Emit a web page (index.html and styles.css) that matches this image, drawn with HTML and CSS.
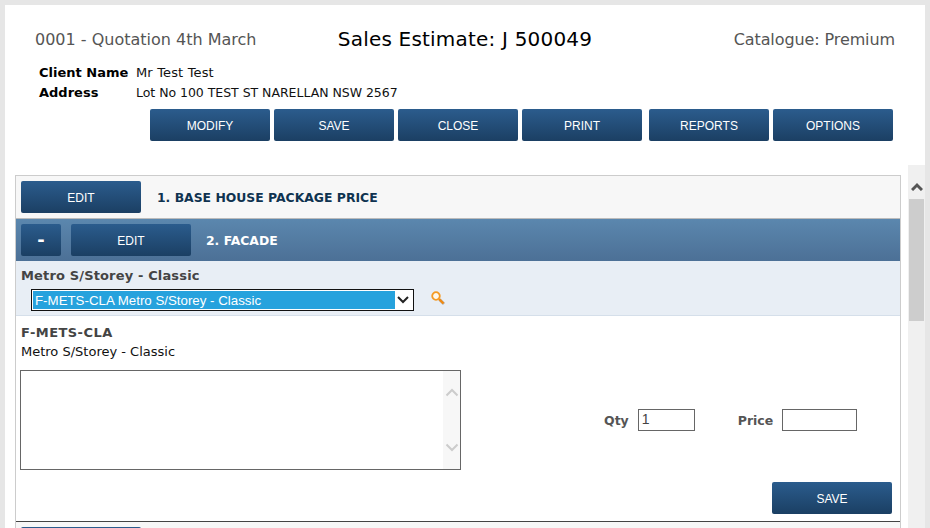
FILE: index.html
```html
<!DOCTYPE html>
<html lang="en">
<head>
<meta charset="utf-8">
<title>Sales Estimate</title>
<link rel="stylesheet" href="styles.css">
</head>
<body>
<div class="sheet">
  <header class="head">
    <div class="title-row">
      <div class="sub-title">0001 - Quotation 4th March</div>
      <h1 class="main-title">Sales Estimate: J 500049</h1>
      <div class="sub-title sub-right">Catalogue: Premium</div>
    </div>
    <dl class="client">
      <dt>Client Name</dt><dd class="client-name">Mr Test Test</dd>
      <dt>Address</dt><dd>Lot No 100 TEST ST NARELLAN NSW 2567</dd>
    </dl>
    <div class="toolbar">
      <div class="btn-group">
        <button class="btn">MODIFY</button>
        <button class="btn">SAVE</button>
        <button class="btn">CLOSE</button>
        <button class="btn">PRINT</button>
      </div>
      <div class="btn-group">
        <button class="btn">REPORTS</button>
        <button class="btn">OPTIONS</button>
      </div>
    </div>
  </header>
  <div class="scroller">
    <main class="list">
      <section class="row-plain">
        <button class="btn">EDIT</button>
        <span class="row-title">1. BASE HOUSE PACKAGE PRICE</span>
      </section>
      <section class="row-active">
        <button class="btn btn-small">-</button>
        <button class="btn">EDIT</button>
        <span class="row-title">2. FACADE</span>
      </section>
      <section class="picker">
        <div class="picker-label">Metro S/Storey - Classic</div>
        <div class="picker-line">
          <div class="fake-select">
            <span class="fake-value">F-METS-CLA Metro S/Storey - Classic</span>
            <svg class="chev" width="17" height="10" viewBox="0 0 17 10"><path d="M3 2l5 5 5-5" fill="none" stroke="#222" stroke-width="2"/></svg>
          </div>
          <svg class="search" width="15" height="15" viewBox="0 0 15 15"><path d="M8.500 8.500l4.500 4.500" stroke="#b5b5b5" stroke-width="3" fill="none"/><path d="M8 8l4.500 4.500" stroke="#f08a12" stroke-width="2.400" fill="none"/><circle cx="5" cy="5" r="3.800" fill="#fff8ea" stroke="#f59a23" stroke-width="1.800"/></svg>
        </div>
      </section>
      <section class="detail">
        <div class="code">F-METS-CLA</div>
        <div class="desc">Metro S/Storey - Classic</div>
        <div class="form-line">
          <div class="notes">
            <div class="notes-bar">
              <svg width="14" height="9" viewBox="0 0 14 9"><path d="M1.500 7.500L7 2l5.500 5.500" fill="none" stroke="#ccc" stroke-width="2"/></svg>
              <svg width="14" height="9" viewBox="0 0 14 9"><path d="M1.500 1.500L7 7l5.500-5.500" fill="none" stroke="#ccc" stroke-width="2"/></svg>
            </div>
          </div>
          <div class="fields">
            <label class="field-label" for="qty">Qty</label>
            <input class="field qty" id="qty" type="text" value="1">
            <label class="field-label price-label" for="price">Price</label>
            <input class="field price" id="price" type="text">
          </div>
        </div>
        <div class="save-line"><button class="btn">SAVE</button></div>
      </section>
      <section class="row-next">
        <button class="btn" aria-label="Edit"></button>
      </section>
    </main>
    <div class="scrollbar">
      <svg class="scroll-up" width="12" height="9" viewBox="0 0 12 9"><path d="M1 8l5-5 5 5" fill="none" stroke="#555" stroke-width="3"/></svg>
      <div class="scroll-thumb"></div>
    </div>
  </div>
</div>
</body>
</html>
```

FILE: styles.css
```css
* { box-sizing: border-box; }
html, body { height: 100%; }
body {
  margin: 0;
  padding: 5px 5px 0;
  background: #e6e6e6;
  overflow: hidden;
  font-family: "DejaVu Sans", sans-serif;
}
.sheet { background: #fff; height: 523px; overflow: hidden; }
.head { height: 160px; padding: 20px 30px 0; }
.title-row {
  display: grid;
  grid-template-columns: 1fr auto 1fr;
  align-items: center;
  height: 28px;
}
.sub-title { font-size: 16px; color: #555; padding-top: 1px; }
.sub-right { text-align: right; letter-spacing: -0.1px; }
.main-title { margin: 0; font-size: 20px; font-weight: 400; color: #000; letter-spacing: 0.2px; }
.client {
  display: grid;
  grid-template-columns: 97px 1fr;
  grid-auto-rows: 20px;
  margin: 9px 0 0 4px;
  align-items: center;
  color: #111;
}
.client dt { font-weight: 700; color: #000; font-size: 13px; }
.client dd { margin: 0; font-size: 12.500px; letter-spacing: -0.03px; }
.client .client-name { font-size: 13px; letter-spacing: 0.15px; }
.toolbar { display: flex; gap: 7px; margin: 7px 0 0 115px; }
.btn-group { display: flex; gap: 4px; }
.btn {
  flex: none;
  width: 120px;
  height: 32px;
  padding: 2px 0 0;
  border: 0;
  border-radius: 2px;
  background: linear-gradient(#2b5c8d, #1b3f63);
  color: #fff;
  font: 12px "Liberation Sans", Arial, sans-serif;
}
.btn-small { width: 40px; padding: 0 0 2px; font: 700 18px "DejaVu Sans", sans-serif; }
.scroller { display: flex; height: 363px; }
.list {
  width: 886px;
  height: 363px;
  margin: 10px 0 0 10px;
  border: 1px solid #ccc;
  border-bottom: 0;
  overflow: hidden;
  flex: none;
}
.row-plain {
  display: flex;
  align-items: center;
  gap: 16px;
  height: 43px;
  padding: 0 5px;
  background: #f7f7f7;
  border-bottom: 1px solid #bbb;
}
.row-title { font-size: 12.400px; font-weight: 700; color: #0f3350; }
.row-active {
  display: flex;
  align-items: center;
  gap: 10px;
  height: 42px;
  padding: 0 5px;
  background: linear-gradient(#5b87ae, #4c7096);
}
.row-active .row-title { color: #fff; margin-left: 5px; }
.picker {
  height: 55px;
  padding: 6px 5px 0;
  background: #e8eef5;
  border-bottom: 1px solid #d5dfea;
}
.picker-label { font-size: 13px; letter-spacing: 0.15px; font-weight: 700; color: #444; line-height: 17px; }
.picker-line { display: flex; align-items: center; gap: 17px; margin: 5px 0 0 10px; }
.fake-select {
  display: flex;
  align-items: center;
  width: 383px;
  height: 22px;
  padding: 1px;
  background: #fff;
  border: 1px solid #111;
}
.fake-value {
  flex: 1;
  height: 18px;
  padding-left: 2px;
  background: #26a2dd;
  color: #fff;
  font: 13.300px/19px "Liberation Sans", Arial, sans-serif;
}
.chev { flex: none; }
.search { flex: none; margin-bottom: 4px; }
.detail { height: 205px; padding: 8px 5px 0 4px; }
.code { font-size: 13px; letter-spacing: 0.45px; font-weight: 700; color: #444; line-height: 17px; margin-left: 1px; }
.desc { font-size: 13px; color: #111; line-height: 17px; margin: 2px 0 0 1px; }
.form-line { display: flex; margin-top: 10px; }
.notes {
  display: flex;
  justify-content: flex-end;
  width: 441px;
  height: 100px;
  border: 1px solid #666;
  flex: none;
}
.notes-bar {
  display: flex;
  flex-direction: column;
  justify-content: space-between;
  align-items: center;
  width: 17px;
  padding: 17px 0 17px;
  background: #f7f7f7;
}
.fields { display: flex; align-items: center; margin: 0 0 0 143px; height: 100px; }
.field-label { font-size: 12.500px; font-weight: 700; color: #555; }
.field { height: 22px; padding: 0 3px 2px; border: 1px solid #666; font: 14px "Liberation Sans", Arial, sans-serif; color: #444; background: #fff; }
.qty { width: 57px; margin-left: 9px; }
.price-label { margin-left: 43px; }
.price { width: 75px; margin-left: 9px; }
.save-line { display: flex; justify-content: flex-end; margin: 12px 3px 0 0; }
.row-next { padding: 5px 5px 0; background: #f7f7f7; border-top: 1px solid #444; height: 60px; }
.scrollbar {
  width: 17px;
  height: 363px;
  margin-left: 7px;
  background: #f0f0f0;
  flex: none;
  padding-left: 1px;
}
.scroll-up { display: block; margin: 17px 0 0 2px; }
.scroll-thumb { width: 15px; height: 122px; margin-top: 8px; background: #cdcdcd; }
```
